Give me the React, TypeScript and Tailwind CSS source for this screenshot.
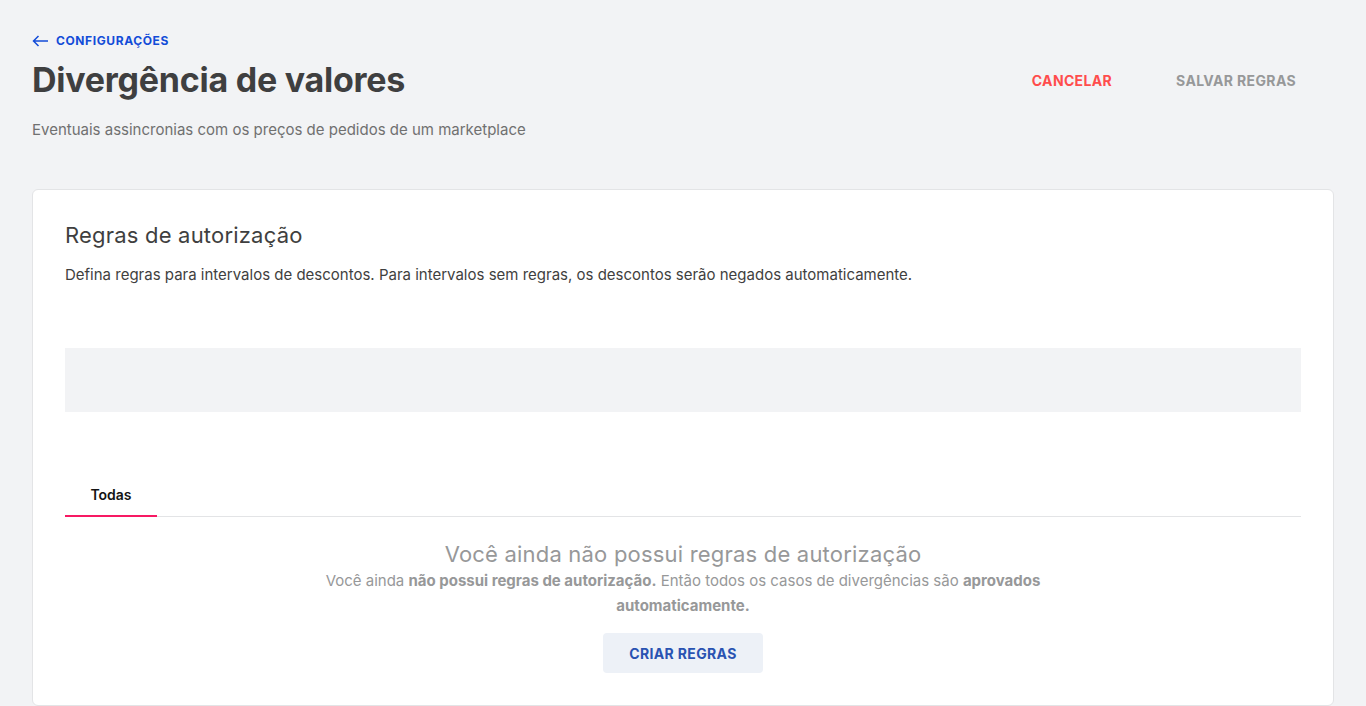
const font = { fontFamily: 'Inter, "Noto Sans", sans-serif' };

function Header() {
  return (
    <div className="flex items-start justify-between">
      <div>
        <a className="flex items-center gap-2 text-[12px] font-bold tracking-[0.6px] text-[#134cd8] uppercase h-[18px]">
          <svg width="16" height="12" viewBox="0 0 16 12" fill="none" stroke="currentColor" strokeWidth="1.5">
            <path d="M16 6H1.5M6.5 1L1.5 6l5 5" />
          </svg>
          Configurações
        </a>
        <h1 className="mt-[8px] text-[34px] leading-[44px] font-bold tracking-[-0.25px] text-[#3f3f40]">
          Divergência de valores
        </h1>
        <p className="mt-[18px] text-[15px] leading-[20px] text-[#707070]">
          Eventuais assincronias com os preços de pedidos de um marketplace
        </p>
      </div>
      <div className="flex items-center mt-[28px] mr-[22px] gap-[32px]">
        <button className="px-4 h-10 text-[14px] font-bold tracking-wide text-[#ff4c4c] uppercase">
          Cancelar
        </button>
        <button className="px-4 h-10 text-[14px] font-bold tracking-wide text-[#979899] uppercase">
          Salvar regras
        </button>
      </div>
    </div>
  );
}

function EmptyState() {
  return (
    <div className="flex flex-col items-center pt-[24px] text-center">
      <h3 className="text-[22px] leading-[26px] tracking-[0.2px] text-[#979899]">
        Você ainda não possui regras de autorização
      </h3>
      <p className="mt-[1px] max-w-[720px] text-[15px] leading-[25px] text-[#979899]">
        Você ainda <b className="font-bold">não possui regras de autorização.</b> Então todos os casos de
        divergências são <b className="font-bold">aprovados automaticamente.</b>
      </p>
      <button className="mt-[15px] h-10 px-[26px] rounded-[4px] bg-[#edf1f7] text-[14px] font-bold tracking-wide text-[#2953b2] uppercase">
        Criar regras
      </button>
    </div>
  );
}

export default function App() {
  return (
    <div className="min-h-[706px] bg-[#f2f3f5] px-[32px] pt-[32px] pb-[1px]" style={font}>
      <Header />
      <div className="mt-[49px] rounded-[6px] border border-[#e3e4e6] bg-white px-[32px] pt-[32px] pb-[32px]">
        <h2 className="text-[22px] leading-[26px] tracking-[0.2px] text-[#3f3f40]">Regras de autorização</h2>
        <p className="mt-[17px] text-[15px] leading-[20px] text-[#3f3f40]">
          Defina regras para intervalos de descontos. Para intervalos sem regras, os descontos serão negados automaticamente.
        </p>
        <div className="mt-[63px] h-[64px] bg-[#f2f3f5]" />
        <div className="mt-[61px] flex border-b border-[#e3e4e6]">
          <div className="w-[92px] h-[44px] flex items-center justify-center border-b-2 border-[#f71963] -mb-px text-[14px] font-semibold text-[#141414]">
            Todas
          </div>
        </div>
        <EmptyState />
      </div>
    </div>
  );
}
